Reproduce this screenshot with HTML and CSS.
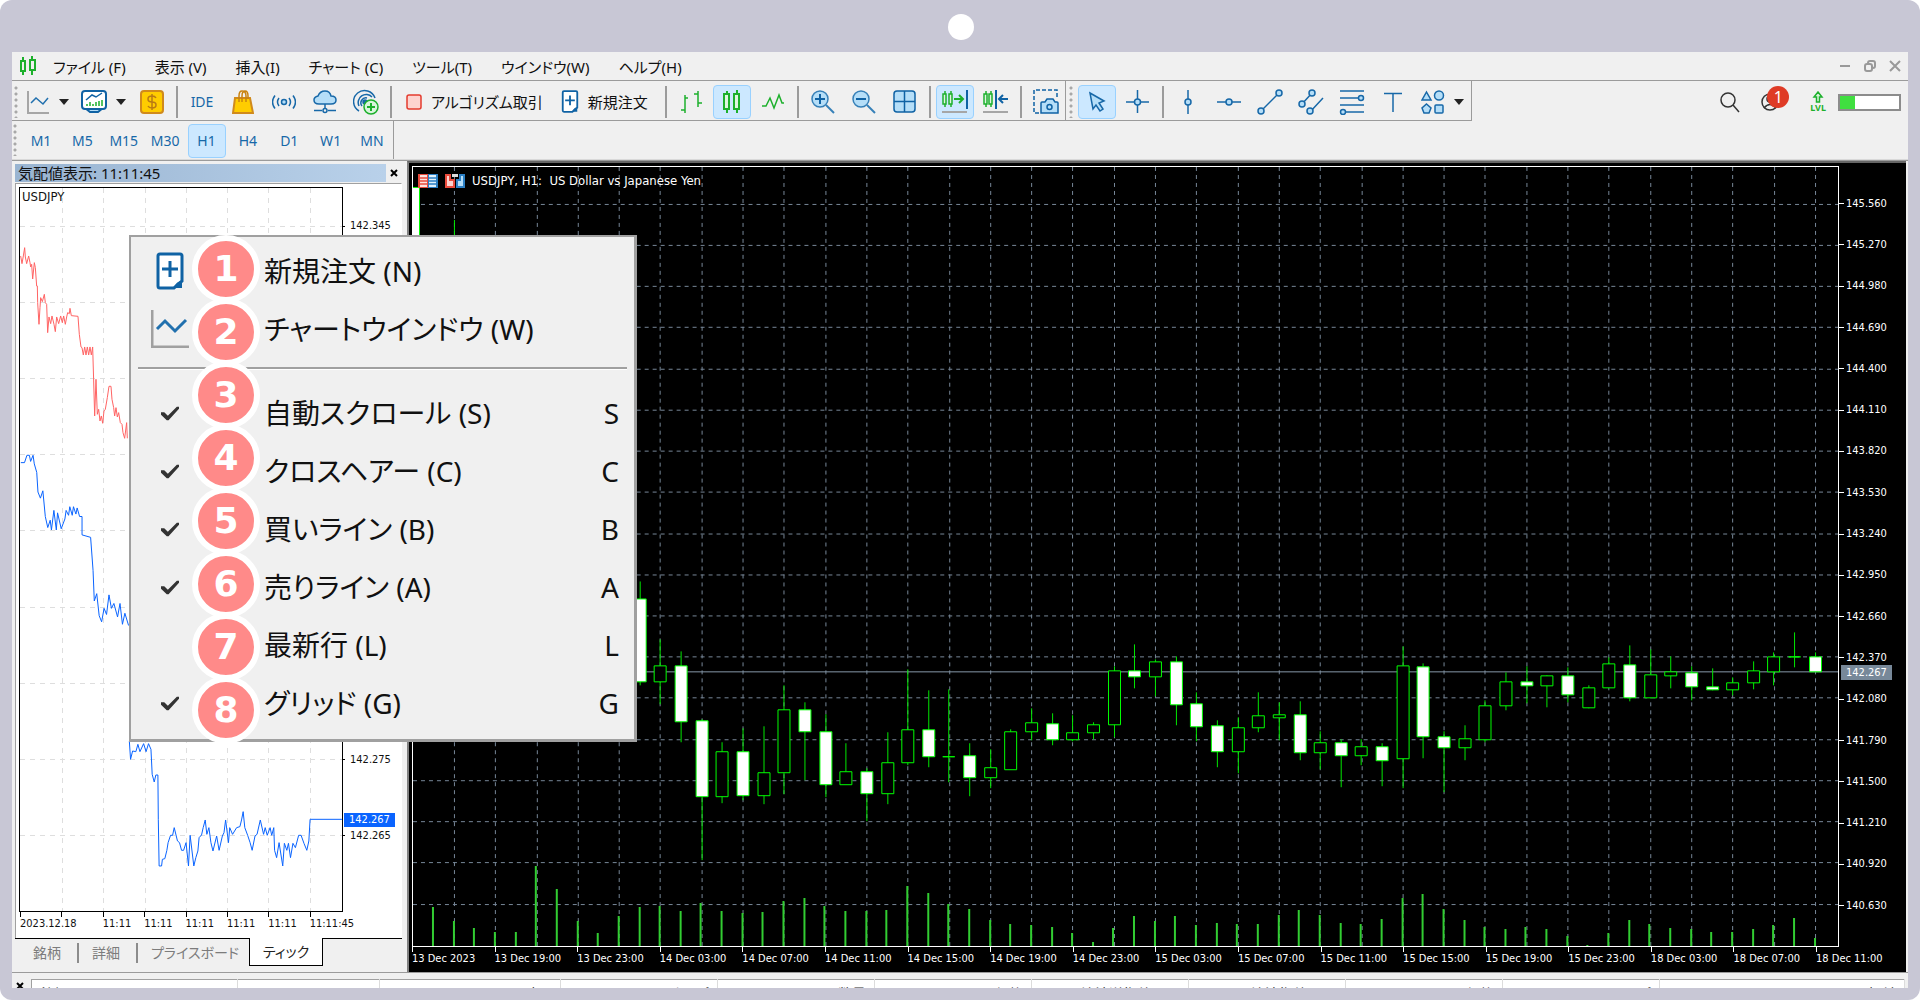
FILE: index.html
```html
<!DOCTYPE html>
<html lang="ja">
<head>
<meta charset="utf-8">
<meta name="viewport" content="width=device-width, initial-scale=1">
<title>USDJPY, H1</title>
<link rel="stylesheet" href="styles.css">
</head>
<body>
<div class="device">
<span class="camera"></span>
<div class="app">
  <header class="menubar">
    <svg class="logo" width="18" height="20" viewBox="0 0 18 20"><g fill="none" stroke="#1db02c" stroke-width="2"><path d="M4 1v4M4 15v4M13 0v4M13 14v5"/><rect x="2" y="5" width="4" height="10"/><rect x="11" y="4" width="5" height="10"/></g></svg>
    <nav class="menus">
      <button>ファイル (F)</button><button>表示 (V)</button><button>挿入(I)</button><button>チャート (C)</button><button>ツール(T)</button><button>ウインドウ(W)</button><button>ヘルプ(H)</button>
    </nav>
    <div class="winctl">
      <button aria-label="最小化"><svg width="12" height="12" viewBox="0 0 12 12"><path d="M1 6h10" stroke="#999" stroke-width="2"/></svg></button>
      <button aria-label="元に戻す"><svg width="12" height="12" viewBox="0 0 12 12"><g fill="none" stroke="#999" stroke-width="2"><rect x="1" y="4" width="7" height="7" rx="2"/><path d="M4 3q0-2 2-2h3q2 0 2 2v3q0 2-2 2"/></g></svg></button>
      <button aria-label="閉じる"><svg width="12" height="12" viewBox="0 0 12 12"><path d="M1 1l10 10M11 1L1 11" stroke="#999" stroke-width="2"/></svg></button>
    </div>
  </header>

  <div class="toolrow">
    <div class="toolbar">
      <span class="grip"></span>
      <button class="tool drop" aria-label="チャート"><svg width="24" height="24" viewBox="0 0 24 24" fill="none"><path d="M2 1v22h21" stroke="#a6a6a6" stroke-width="2"/><path d="M5 13l5-5 7 6 5-6" stroke="#2170ae" stroke-width="1.500"/></svg><i class="caret"></i></button>
      <button class="tool drop" aria-label="指標"><svg width="26" height="26" viewBox="0 0 26 26" fill="none" stroke="#0f62a4" stroke-width="2"><path d="M4 19l5 4h8l5-4" fill="#b5def8"/><rect x="1" y="2" width="24" height="18" rx="3" fill="#fff"/><path d="M5 11l6-5 4 2 6-4" stroke-width="1.5"/><path d="M6 17v-2M9 17v-4M12 17v-2M15 17v-4M18 17v-5M21 17v-6" stroke="#1db02c" stroke-width="1.5"/></svg><i class="caret"></i></button>
      <button class="tool" aria-label="取引"><svg width="24" height="24" viewBox="0 0 24 24"><rect x="1" y="1" width="22" height="22" rx="3" fill="#fc0" stroke="#d08a1c" stroke-width="2"/><path d="M16 8q-1-2-4-2-4 0-4 3t4 3 4 3-4 3q-3 0-4-2M12 4v16" fill="none" stroke="#b97a14" stroke-width="1.500"/></svg></button>
      <span class="sep"></span>
      <button class="tool">IDE</button>
      <button class="tool" aria-label="マーケット"><svg width="22" height="24" viewBox="0 0 22 24"><path d="M3 8h15l3 15H1z" fill="#fc0" stroke="#d08a1c" stroke-width="2"/><path d="M7 12V6q0-5 3-5 4 0 4 5v6M10 12V6q0-5 3-5 3 0 3 5v3" fill="none" stroke="#c9820f" stroke-width="1.5"/></svg></button>
      <button class="tool" aria-label="シグナル"><svg width="24" height="24" viewBox="0 0 24 24" fill="none" stroke="#1768a8" stroke-width="1.500"><circle cx="12" cy="12" r="2.5" fill="#b5def8"/><path d="M7 8q-3 4 0 8M17 8q3 4 0 8M3 5.500q-5 6.500 0 13M21 5.500q5 6.500 0 13"/></svg></button>
      <button class="tool" aria-label="VPS"><svg width="24" height="24" viewBox="0 0 24 24" fill="none" stroke="#1768a8" stroke-width="1.500"><path d="M6 14q-5 0-5-4 0-3 4-4 2-5 7-5t6 5q5 0 5 4t-5 4z" fill="#b5def8"/><path d="M12 14v4M1 20.500h8M15 20.500h8"/><circle cx="12" cy="20.500" r="2"/></svg></button>
      <button class="tool" aria-label="通知"><svg width="26" height="26" viewBox="0 0 26 26" fill="none" stroke="#1768a8" stroke-width="1.500"><path d="M6 22A11 11 0 1 1 22 9M6 17A8 8 0 0 1 19 8M9 17a5 5 0 0 1 5-8"/><circle cx="12" cy="13" r="2" fill="#1768a8"/><circle cx="18" cy="18" r="7" fill="#d9f5dc" stroke="#1db02c"/><path d="M14 18h8M18 14v8" stroke="#1db02c" stroke-width="2"/></svg></button>
      <span class="sep"></span>
      <button class="tool wide algo"><svg width="16" height="16" viewBox="0 0 16 16"><rect x="1" y="1" width="14" height="14" rx="2" fill="#fdd3cf" stroke="#e33b2e" stroke-width="1.500"/></svg>アルゴリズム取引</button>
      <button class="tool wide order"><svg width="18" height="23" viewBox="0 0 28 38"><path d="M4 2h20q2 0 2 2v25l-8 7H4q-2 0-2-2V4q0-2 2-2z" fill="#fff" stroke="#0f62a4" stroke-width="3"/><path d="M26 29v7h-8q2-7 8-7z" fill="#0f62a4"/><path d="M6 17h16M14 9v16" stroke="#0f62a4" stroke-width="3"/></svg>新規注文</button>
      <span class="sep"></span>
      <button class="tool" aria-label="バー"><svg width="22" height="24" viewBox="0 0 22 24"><path d="M5 5v18M1 20h4M5 8h3M18 1v16M14 4h4M18 13h4" stroke="#1db02c" stroke-width="1.500"/></svg></button>
      <button class="tool on" aria-label="ローソク足"><svg width="18" height="24" viewBox="0 0 18 24"><g fill="#dff6e0" stroke="#1db02c" stroke-width="2"><path d="M4 1v22M14 0v23"/><rect x="1" y="4" width="5" height="15"/><rect x="11" y="4" width="5" height="15"/></g></svg></button>
      <button class="tool" aria-label="ライン"><svg width="22" height="18" viewBox="0 0 22 18"><path d="M0 13h4l4-8 4 10 5-13 3 8h2" fill="none" stroke="#1db02c" stroke-width="1.500"/></svg></button>
      <span class="sep"></span>
      <button class="tool" aria-label="拡大"><svg width="24" height="24" viewBox="0 0 24 24" fill="none" stroke="#0f62a4"><path d="M15 15l8 8" stroke="#3680b8" stroke-width="2"/><circle cx="9" cy="9" r="8" fill="#b5def8" stroke="#3680b8" stroke-width="1.500"/><path d="M4 9h10M9 4v10" stroke-width="2"/></svg></button>
      <button class="tool" aria-label="縮小"><svg width="24" height="24" viewBox="0 0 24 24" fill="none" stroke="#0f62a4"><path d="M15 15l8 8" stroke="#3680b8" stroke-width="2"/><circle cx="9" cy="9" r="8" fill="#b5def8" stroke="#3680b8" stroke-width="1.500"/><path d="M4 9h10" stroke-width="2"/></svg></button>
      <button class="tool" aria-label="整列"><svg width="24" height="24" viewBox="0 0 24 24"><rect x="1" y="1" width="21" height="21" rx="3" fill="#b5def8" stroke="#0f62a4" stroke-width="1.500"/><path d="M11.500 1v21M1 11.500h21" stroke="#0f62a4" stroke-width="1.500"/></svg></button>
      <span class="sep"></span>
      <button class="tool on" aria-label="自動スクロール"><svg width="26" height="24" viewBox="0 0 26 24" fill="none" stroke="#1db02c" stroke-width="1.500"><path d="M3 1v16M9 1v16"/><rect x="1" y="4" width="3" height="10" fill="#dff6e0"/><rect x="7" y="4" width="3" height="10" fill="#dff6e0"/><path d="M12 9h9M17 5l4 4-4 4" stroke-width="2"/><path d="M25 0v19" stroke="#0f62a4" stroke-width="2"/><path d="M0 22h25" stroke="#a6a6a6" stroke-width="2"/></svg></button>
      <button class="tool" aria-label="チャートシフト"><svg width="26" height="24" viewBox="0 0 26 24" fill="none" stroke="#1db02c" stroke-width="1.500"><path d="M3 1v16M8 1v16"/><rect x="1" y="4" width="3" height="10" fill="#dff6e0"/><rect x="6" y="4" width="3" height="10" fill="#dff6e0"/><g stroke="#0f62a4" stroke-width="2"><path d="M13 0v19M17 9h8M20 5l-4 4 4 4"/></g><path d="M0 22h25" stroke="#a6a6a6" stroke-width="2"/></svg></button>
      <span class="sep"></span>
      <button class="tool" aria-label="画面保存"><svg width="26" height="26" viewBox="0 0 26 26" fill="none" stroke="#0f62a4"><path d="M6 24H1V1h23v9" stroke-width="1.500" stroke-dasharray="4 2"/><path d="M9 13h3l2-3h6l2 3h2q1 0 1 1v10H8V14q0-1 1-1z" fill="#b5def8" stroke-width="1.500"/><circle cx="16.500" cy="18" r="2.500" stroke-width="1.500"/></svg></button>
    </div>
    <div class="toolbar">
      <span class="grip"></span>
      <button class="tool on" aria-label="カーソル"><svg width="20" height="22" viewBox="0 0 20 22"><path d="M3 2l14 8-5 2 4 6-3 2-4-6-3 4z" fill="#b5def8" stroke="#1768a8" stroke-width="1.500"/></svg></button>
      <button class="tool" aria-label="十字カーソル"><svg width="24" height="24" viewBox="0 0 24 24"><g fill="#b5def8" stroke="#1768a8" stroke-width="1.500"><path d="M11.500 0v23M0 12h23"/><circle cx="11.500" cy="12" r="3"/></g></svg></button>
      <span class="sep"></span>
      <button class="tool" aria-label="垂直線"><svg width="8" height="24" viewBox="0 0 8 24"><g fill="#b5def8" stroke="#1768a8" stroke-width="1.500"><path d="M4 0v24"/><circle cx="4" cy="12" r="3"/></g></svg></button>
      <button class="tool" aria-label="水平線"><svg width="24" height="8" viewBox="0 0 24 8"><g fill="#b5def8" stroke="#1768a8" stroke-width="1.500"><path d="M0 4h24"/><circle cx="12" cy="4" r="3"/></g></svg></button>
      <button class="tool" aria-label="トレンドライン"><svg width="26" height="26" viewBox="0 0 26 26"><g fill="#b5def8" stroke="#1768a8" stroke-width="1.500"><path d="M4 22L22 4"/><circle cx="4" cy="22" r="3"/><circle cx="22" cy="4" r="3"/></g></svg></button>
      <button class="tool" aria-label="チャンネル"><svg width="26" height="26" viewBox="0 0 26 26"><g fill="#b5def8" stroke="#1768a8" stroke-width="1.500"><path d="M4 15L14 4M12 23L25 9"/><circle cx="4" cy="15" r="3"/><circle cx="14" cy="4" r="3"/><circle cx="12" cy="22" r="3"/></g></svg></button>
      <button class="tool" aria-label="フィボナッチ"><svg width="26" height="26" viewBox="0 0 26 26"><g fill="#b5def8" stroke="#1768a8" stroke-width="1.500"><path d="M1 2h24M1 9h24M1 16h24M1 23h24"/><circle cx="22" cy="9" r="2.500"/><circle cx="4" cy="23" r="2.500"/></g></svg></button>
      <button class="tool" aria-label="テキスト"><svg width="18" height="20" viewBox="0 0 18 20"><path d="M0 1.500h18M9 2v18" stroke="#1768a8" stroke-width="1.500"/></svg></button>
      <button class="tool shapes" aria-label="図形"><svg width="24" height="24" viewBox="0 0 24 24"><g fill="#b5def8" stroke="#1768a8" stroke-width="1.500"><path d="M5.500 2l4.500 8H1z"/><circle cx="18" cy="5.500" r="4.500"/><path d="M5.500 14l4.500 4-2 5H3l-2-5z"/><rect x="14" y="15" width="8" height="8" rx="1"/></g></svg><i class="caret"></i></button>
    </div>
    <div class="status">
      <button aria-label="検索"><svg width="20" height="22" viewBox="0 0 20 22" fill="none" stroke="#333" stroke-width="1.500"><circle cx="8" cy="9" r="7"/><path d="M13 14l6 7"/></svg></button>
      <button class="user" aria-label="アカウント"><svg width="20" height="20" viewBox="0 0 20 20" fill="none" stroke="#333" stroke-width="1.500"><circle cx="10" cy="10" r="8"/><circle cx="10" cy="7" r="3"/><path d="M4 16q6-7 12 0"/></svg><b class="count">1</b></button>
      <span class="lvl"><svg width="12" height="12" viewBox="0 0 12 12"><path d="M6 1l4 5H7.500v5h-3V6H2z" fill="#d9f5dc" stroke="#1db02c" stroke-width="1.500"/></svg>LVL</span>
      <span class="meter"><i style="width:26%"></i></span>
    </div>
  </div>

  <div class="periods">
    <span class="grip"></span>
    <div class="plist"><button>M1</button><button>M5</button><button>M15</button><button>M30</button><button class="on">H1</button><button>H4</button><button>D1</button><button>W1</button><button>MN</button></div>
  </div>

  <main class="work">
    <section class="watch">
      <div class="wtitle"><h2>気配値表示: 11:11:45</h2><button aria-label="閉じる"><svg width="8" height="8" viewBox="0 0 8 8"><path d="M1 1l6 6M7 1L1 7" stroke="#000" stroke-width="2"/></svg></button></div>
      <div class="ticks">
        <div class="tplot">
          <svg viewBox="20 187 322 723" preserveAspectRatio="none">
            <path class="tgrid" d="M62.500 187V910M103.500 187V910M145.500 187V910M186.500 187V910M227.500 187V910M268.500 187V910M310.500 187V910M20 225.500H342M20 301.500H342M20 377.500H342M20 453.500H342M20 529.500H342M20 606.500H342M20 682.500H342M20 758.500H342M20 834.500H342"/>
            <polyline class="ask" transform="translate(0 150) scale(.3333)" points="62,315 66,338 70,315 74,290 76,318 80,338 86,315 90,335 92,348 95,340 98,384 103,335 106,350 110,405 112,405 113,455 117,520 120,470 122,440 127,452 133,430 136,455 140,460 143,545 147,498 152,518 156,495 162,520 166,542 170,498 176,518 182,495 187,515 191,495 196,520 200,498 203,485 208,488 210,472 214,494 234,496 238,550 243,588 246,590 250,612 254,588 258,612 262,588 266,612 270,588 274,612 278,588 281,690 284,795 288,685 292,790 296,775 300,810 304,795 308,817 312,780 316,775 322,740 327,706 333,706 336,745 341,770 344,795 348,770 352,798 356,785 361,815 366,820 369,845 374,862 380,815 382,862"/>
            <polyline class="bid" transform="scale(1.2245)" points="17,377 20,377 22,371 24,371 25,376 27,371 28,378 30,385 31,401 33,406 35,400 37,421 39,430 41,424 42,432 44,416 46,432 47,418 50,431 53,423 54,416 56,420 57,413 59,420 60,413 62,419 63,414 65,421 67,421 67,436 74,438 76,465 77,490 79,484 81,502 83,507 85,496 87,501 89,485 91,496 93,492 96,503 98,492 100,509 102,500 105,510"/>
            <polyline class="bid" transform="translate(0 680) scale(.408 .3333)" points="317,180 320,235 325,210 333,212 338,190 343,212 352,188 358,212 364,188 370,205 373,280 378,303 382,282 387,282 388,415 390,555 396,555 398,535 404,533 409,508 412,485 418,463 423,463 427,440 435,480 440,485 445,508 450,508 456,485 462,555 466,463 475,555 480,530 485,510 488,470 494,462 498,440 503,417 507,460 512,440 517,485 522,510 531,465 537,508 545,465 549,455 553,417 560,485 563,440 570,460 580,440 588,437 592,417 596,392 600,440 607,463 613,485 618,508 625,465 630,460 638,417 646,460 650,440 655,463 662,440 666,463 671,440 673,508 678,530 684,485 693,555 697,487 703,508 707,487 712,530 718,487 724,500 732,463 738,463 745,487 752,508 757,480 760,415 838,415"/>
          </svg>
        </div>
        <div class="tprices"><span class="r1">142.345</span><span class="r8">142.275</span><span class="r9">142.265</span><b class="bidtag">142.267</b></div>
        <div class="ttimes"><span>2023.12.18</span><span></span><span>11:11</span><span>11:11</span><span>11:11</span><span>11:11</span><span>11:11</span><span>11:11:45</span></div>
        <span class="tsym">USDJPY</span>
      </div>
      <div class="tabs"><button>銘柄</button><button>詳細</button><button>プライスボード</button><button class="cur">ティック</button></div>
    </section>

    <section class="chart">
      <div class="plot">
        <svg id="plot" viewBox="412 166 1427 780" preserveAspectRatio="none"></svg>
        <div class="ctitle">
          <svg width="20" height="14" viewBox="0 0 20 14"><path d="M0 0h10v14H0z" fill="#e94b3c"/><path d="M10 0h10v14H10z" fill="#2b7fc4"/><path d="M2 1h7v12H2z" fill="#fde4e1"/><path d="M11 1h7v12h-7z" fill="#e1f1fc"/><path d="M2 4h7M2 7h7M2 10h7" stroke="#e94b3c" stroke-width="1.500"/><path d="M11 4h7M11 7h7M11 10h7" stroke="#2b7fc4" stroke-width="1.500"/></svg>
          <svg width="20" height="14" viewBox="0 0 20 14"><path d="M1 1h4v5h4v7H1z" fill="#fdd3cf" stroke="#e94b3c" stroke-width="2"/><path d="M19 1h-4v5h-3v7h7z" fill="#b5def8" stroke="#2b7fc4" stroke-width="2"/><path d="M7 0h6v3H7z" fill="#ddd"/></svg>
          <h1>USDJPY, H1:&nbsp; US Dollar vs Japanese Yen</h1>
        </div>
      </div>
      <div class="prices"><span>145.560</span><span>145.270</span><span>144.980</span><span>144.690</span><span>144.400</span><span>144.110</span><span>143.820</span><span>143.530</span><span>143.240</span><span>142.950</span><span>142.660</span><span>142.370</span><span>142.080</span><span>141.790</span><span>141.500</span><span>141.210</span><span>140.920</span><span>140.630</span><b class="last">142.267</b></div>
      <div class="times"><span>13 Dec 2023</span><span>13 Dec 19:00</span><span>13 Dec 23:00</span><span>14 Dec 03:00</span><span>14 Dec 07:00</span><span>14 Dec 11:00</span><span>14 Dec 15:00</span><span>14 Dec 19:00</span><span>14 Dec 23:00</span><span>15 Dec 03:00</span><span>15 Dec 07:00</span><span>15 Dec 11:00</span><span>15 Dec 15:00</span><span>15 Dec 19:00</span><span>15 Dec 23:00</span><span>18 Dec 03:00</span><span>18 Dec 07:00</span><span>18 Dec 11:00</span></div>
    </section>
  </main>

  <footer class="terminal">
    <button aria-label="閉じる"><svg width="8" height="8" viewBox="0 0 8 8"><path d="M1 1l6 6M7 1L1 7" stroke="#000" stroke-width="2"/></svg></button>
    <table><thead><tr><th class="l c1">銘柄</th><th class="l c2">チケット</th><th class="c3">時間</th><th class="c4">タイプ</th><th class="c4">数量</th><th class="c4">価格</th><th class="c4">決済逆指値(S/L)</th><th class="c4">決済指値(T/P)</th><th class="c4">価格</th><th class="c4">スワップ</th><th>損益</th></tr></thead></table>
  </footer>
</div>

<div class="popup" role="menu">
  <button role="menuitem"><svg width="28" height="38" viewBox="0 0 28 38"><path d="M4 2h20q2 0 2 2v25l-8 7H4q-2 0-2-2V4q0-2 2-2z" fill="#fff" stroke="#0f62a4" stroke-width="3"/><path d="M26 29v7h-8q2-7 8-7z" fill="#0f62a4"/><path d="M6 17h16M14 9v16" stroke="#0f62a4" stroke-width="3"/></svg><span>新規注文 (N)</span></button>
  <button role="menuitem"><svg width="38" height="38" viewBox="0 0 38 38" fill="none"><path d="M1 0v37h37" stroke="#a0a0a0" stroke-width="3"/><path d="M6 19l8-8 10 10 11-11" stroke="#2170ae" stroke-width="3"/></svg><span>チャートウインドウ (W)</span></button>
  <hr>
  <label><input type="checkbox" checked><span>自動スクロール (S)</span><kbd>S</kbd></label>
  <label><input type="checkbox" checked><span>クロスヘアー (C)</span><kbd>C</kbd></label>
  <label><input type="checkbox" checked><span>買いライン (B)</span><kbd>B</kbd></label>
  <label><input type="checkbox" checked><span>売りライン (A)</span><kbd>A</kbd></label>
  <label><input type="checkbox"><span>最新行 (L)</span><kbd>L</kbd></label>
  <label><input type="checkbox" checked><span>グリッド (G)</span><kbd>G</kbd></label>
</div>
<ol class="steps"><li>1</li><li>2</li><li>3</li><li>4</li><li>5</li><li>6</li><li>7</li><li>8</li></ol>
</div>
<script src="chart.js"></script>
</body>
</html>
```
FILE: styles.css
```css
* { box-sizing: border-box; }
body {
  margin: 0;
  background: #fff;
  color: #111;
  font-family: "Noto Sans", "Noto Sans CJK JP", sans-serif;
  font-feature-settings: "palt";
}
button {
  margin: 0; padding: 0; border: 0; background: none;
  font: inherit; font-feature-settings: inherit; color: inherit;
}
svg { display: block; flex: none; }
h1, h2 { margin: 0; font-weight: 400; }

.device {
  position: relative;
  height: 100vh; min-height: 760px;
  padding: 52px 12px 12px;
  border-radius: 12px;
  background: #c8c7d5;
}
.camera {
  position: absolute; top: 14px; left: 50%;
  width: 26px; height: 26px; margin-left: -12px;
  border-radius: 50%; background: #fff;
}
.app {
  display: flex; flex-direction: column;
  height: 100%; overflow: hidden;
  background: #f0f0f0;
}

/* menu bar */
.menubar {
  display: flex; align-items: center; flex: none;
  height: 29px; padding: 0 7px;
  border-bottom: 1px solid #9b9b9b;
}
.menus { display: flex; gap: 29px; margin-left: 16px; font-size: 15px; line-height: 20px; }
.menus button { padding-top: 1px; white-space: nowrap; }
.winctl { display: flex; gap: 13px; margin-left: auto; }

/* toolbars */
.toolrow { display: flex; flex: none; height: 40px; }
.toolbar {
  display: flex; align-items: center; gap: 3px;
  padding-top: 2px;
  border-right: 1px solid #9b9b9b; border-bottom: 1px solid #9b9b9b;
}
.grip {
  flex: none; width: 4px; height: 32px; margin-left: 1px;
  background: radial-gradient(circle at 2px 2px, #a8a8a8 1px, transparent 2px) 0 0 / 4px 6px;
}
.toolbar .grip { margin-left: 2px; }
.toolbar + .toolbar .grip { margin-right: 2px; margin-left: 3px; }
.tool {
  display: flex; align-items: center; justify-content: center; flex: none;
  width: 38px; height: 34px;
  border: 1px solid transparent; border-radius: 4px;
  color: #1768a8; font-size: 14px; line-height: 20px;
}
.tool.on, .plist .on { background: #cce8ff; border: 1px solid #99d1ff; }
.drop { width: 53px; gap: 9px; }
.shapes { width: 56px; gap: 9px; }
.wide { width: auto; padding: 0 8px; color: #111; font-size: 15px; gap: 9px; white-space: nowrap; }
.algo { padding-right: 6px; }
.order { padding: 0 11px 0 7px; }
.caret { border: 5px solid transparent; border-top: 6px solid #222; border-bottom: 0; }
.sep { flex: none; width: 2px; height: 32px; margin: 0 2px; background: #9b9b9b; }
.status { display: flex; align-items: center; margin-left: auto; padding: 2px 7px 0 0; }
.user { position: relative; margin: 0 30px 0 20px; }
.count {
  position: absolute; left: 7px; top: -6px;
  width: 22px; height: 22px; border-radius: 50%;
  background: #df3b26; color: #fff;
  font-size: 16px; line-height: 22px; font-weight: 400; text-align: center;
}
.lvl {
  display: flex; flex-direction: column; align-items: center;
  color: #1db02c; font-size: 9px; line-height: 10px; font-weight: 700;
}
.meter { width: 63px; height: 17px; margin-left: 12px; border: 2px solid #8c8c8c; background: #fff; }
.meter i { display: block; height: 100%; background: #40df40; }

.periods { display: flex; align-items: center; flex: none; height: 39px; border-bottom: 1px solid #d9d9d9; }
.plist {
  display: flex; align-items: center; justify-content: space-between;
  width: 372px; height: 38px; margin-left: 5px; padding: 1px 2px 0 0;
  border-right: 1px solid #9b9b9b;
}
.plist button {
  width: 38px; height: 34px; border: 1px solid transparent; border-radius: 4px;
  color: #1768a8; font-size: 14px; line-height: 20px;
}

/* work area */
.work { display: flex; flex: 1; min-height: 0; border-top: 1px solid #9b9b9b; border-bottom: 1px solid #9b9b9b; }
.watch { display: flex; flex-direction: column; flex: none; width: 395px; padding: 3px 5px 6px 3px; }
.wtitle { display: flex; flex: none; height: 18px; margin-bottom: 1px; }
.wtitle h2 {
  flex: 1; padding-left: 3px;
  background: linear-gradient(90deg, #99b4d1, #b9d1ea);
  font-size: 15px; line-height: 18px;
}
.wtitle button { display: grid; place-items: center; width: 16px; }
.ticks {
  position: relative;
  display: grid; flex: 1; min-height: 0;
  grid-template: minmax(0, 1fr) 26px / 324px minmax(0, 1fr);
  padding: 3px 0 0 3px;
  border: 1px solid #a0a0a0; border-bottom: 0; border-right-color: #fff;
  background: #fff;
  font: 11px/14px "DejaVu Sans Condensed", "DejaVu Sans", sans-serif;
}
.tplot { min-height: 0; border: 1px solid #000; }
.tplot svg, .plot svg#plot { width: 100%; height: 100%; }
.tgrid { fill: none; stroke: #dedede; stroke-dasharray: 5 5; }
.ask, .bid { fill: none; stroke: #ff6464; vector-effect: non-scaling-stroke; }
.bid { stroke: #0a64ff; }
.tsym { position: absolute; left: 6px; top: 5px; font-size: 13px; line-height: 16px; }
.tprices {
  position: relative; display: grid;
  grid-template-rows: 1fr repeat(9, minmax(0, 76fr)) 38fr;
}
.tprices span { display: flex; align-items: center; gap: 5px; }
.tprices span::before { content: ""; width: 2px; height: 1px; background: #000; }
.r1 { grid-row: 2; }
.r8 { grid-row: 9; }
.r9 { grid-row: 10; }
.bidtag {
  position: absolute; left: 1px; top: 86%; margin-top: 2px;
  padding: 0 5px; background: #0a64ff; color: #fff; font-weight: 400;
}
.ttimes {
  display: grid; grid-column: 1 / -1; grid-template-columns: repeat(8, minmax(0, 1fr));
  margin-right: 50px; padding-left: 1px;
}
.ttimes span { white-space: nowrap; }
.ttimes span::before, .times span::before { content: ""; display: block; width: 1px; height: 5px; background: #000; }
.tabs {
  display: flex; flex: none; height: 28px; padding-left: 18px;
  border-top: 1px solid #000; color: #7c7c7c; font-size: 14px; line-height: 26px;
}
.tabs button { position: relative; margin-right: 31px; white-space: nowrap; }
.tabs button + button:not(.cur)::before {
  content: ""; position: absolute; left: -15px; top: 4px; width: 2px; height: 20px; background: #8c8c8c;
}
.tabs button:nth-child(3) { margin-right: 10px; }
.tabs .cur { margin: -1px 0 0; padding: 0 13px; border: 1px solid #000; border-top: 0; background: #fff; color: #222; }

.chart {
  display: grid; flex: 1; min-width: 0;
  grid-template: minmax(0, 1fr) 25px / minmax(0, 1fr) 67px;
  margin-right: 2px; padding: 3px 0 0 3px;
  border-left: 2px solid #808080; border-top: 2px solid #666;
  background: #000; color: #fff;
  font: 11px/14px "DejaVu Sans Condensed", "DejaVu Sans", sans-serif;
}
.plot { position: relative; min-height: 0; border: 1px solid #fff; }
.grid { fill: none; stroke: #778899; stroke-dasharray: 4 4; }
.now { stroke: #8798a9; }
.wick { fill: none; stroke: #00e800; }
.up { fill: #000; stroke: #0f0; }
.down { fill: #fff; stroke: #0f0; }
.vol { fill: none; stroke: #32cd32; stroke-width: 2; }
.ctitle { position: absolute; left: 5px; top: 7px; display: flex; align-items: center; gap: 7px; }
.ctitle h1 { font-size: 13px; line-height: 14px; white-space: nowrap; }
.prices {
  position: relative; display: grid;
  grid-template-rows: repeat(18, minmax(0, 412fr)) 205fr;
  padding-top: 17px;
}
.prices span { display: flex; align-items: center; gap: 2px; }
.prices span::before { content: ""; width: 5px; height: 1px; background: #fff; }
.last {
  position: absolute; left: 2px; top: 64%; margin-top: -1px;
  padding: 0 5px; background: #778899; font-weight: 400; line-height: 15px;
}
.times { display: grid; grid-column: 1 / -1; grid-template-columns: repeat(17, minmax(0, 36fr)) minmax(0, 10fr); margin-right: 67px; }
.times span { white-space: nowrap; }
.times span::before { background: #fff; }

/* terminal header */
.terminal { display: flex; flex: none; height: 15px; padding: 6px 3px 0 4px; overflow: hidden; }
.terminal button { width: 8px; height: 8px; margin-top: 3px; margin-right: 7px; }
.terminal table {
  flex: 1; height: 30px; table-layout: fixed; border-collapse: collapse;
  border: 1px solid #a0a0a0; border-bottom: 0; background: #fff; font-size: 14px; line-height: 20px;
}
.terminal th {
  padding: 4px 8px 0; border-right: 1px solid #dcdcdc; font-weight: 400;
  text-align: right; vertical-align: top; white-space: nowrap; color: #333;
}
.terminal .l { text-align: left; }
.c1 { width: 206px; }
.c2 { width: 142px; }
.c3 { width: 181px; }
.c4 { width: 157px; }

/* context menu */
.popup {
  position: absolute; left: 129px; top: 235px;
  display: flex; flex-direction: column;
  width: 508px; padding: 5px 7px 7px;
  border: 3px solid #a0a0a0; border-top-width: 2px; border-left-width: 2px;
  background: #f0f0f0;
  font-size: 28px; line-height: 40px;
}
.popup button, .popup label {
  display: grid; grid-template-columns: 38px minmax(0, 1fr) auto; align-items: center;
  height: 58px; column-gap: 75px; padding: 0 8px 0 13px;
  text-align: left; white-space: nowrap;
}
.popup svg, .popup input { justify-self: center; }
.popup input {
  appearance: none; width: 18px; height: 15px; margin: 0;
  clip-path: polygon(0 45%, 18% 45%, 38% 68%, 88% 8%, 100% 8%, 100% 22%, 42% 98%, 32% 98%, 0 62%);
}
.popup input:checked { background: #333; }
.popup hr { width: 100%; height: 3px; margin: 9px 0 14px; border: 0; border-top: 2px solid #a0a0a0; border-bottom: 1px solid #fff; }
.popup kbd { font-family: inherit; }
.steps { position: absolute; left: 192px; top: 235px; margin: 0; padding: 0; list-style: none; }
.steps li {
  width: 68px; height: 68px; margin-bottom: -5px;
  border: 6px solid #fff; border-radius: 50%;
  background: #ff8a89; color: #fff;
  font: bold 36px/56px "DejaVu Sans", sans-serif; text-align: center;
}
```
FILE: chart.js
```js
// Candles: high, body top, body bottom, low, filled (1) or hollow (0)
const candles = [
  [581,598,681,685,1],[639,665,681,704,0],[651,665,721,742,1],[719,720,796,860,1],[742,751,796,803,0],
  [728,751,795,800,1],[726,772,795,804,0],[685,709,772,794,0],[702,709,731,780,1],[714,731,784,797,1],
  [743,771,784,784,0],[768,771,793,821,1],[732,762,793,804,0],[669,729,762,765,0],[690,729,756,767,1],
  [689,756,756,782,0],[743,755,777,796,1],[749,767,777,788,0],[729,731,769,769,0],[708,722,731,740,0],
  [713,723,739,745,1],[715,732,739,741,0],[722,724,732,739,0],[666,670,724,737,0],[644,670,676,688,1],
  [659,661,676,696,0],[656,661,704,725,1],[692,703,726,741,1],[720,725,751,767,1],[717,727,751,773,0],
  [692,715,727,732,0],[702,714,717,740,0],[701,714,752,760,1],[731,742,752,769,0],[739,742,755,787,1],
  [739,746,755,765,0],[743,746,760,786,1],[646,665,758,788,0],[663,666,736,758,1],[731,736,747,792,1],
  [725,738,747,760,0],[700,705,739,742,0],[672,681,705,710,0],[666,681,685,703,1],[675,675,685,707,0],
  [667,675,694,702,1],[685,687,707,708,0],[657,663,687,687,0],[645,664,697,701,1],[649,674,697,697,0],
  [656,671,675,688,0],[666,672,686,700,1],[668,686,689,690,1],[677,682,689,695,0],[661,670,682,689,0],
  [652,656,671,685,0],[632,656,656,667,0],[652,656,671,671,1]
];
// Tops of the volume bars, left to right
const volumes = [
  907,921,928,932,932,866,889,921,933,916,907,906,911,903,911,913,912,901,898,906,911,911,910,886,893,
  904,909,920,924,925,927,933,942,928,916,921,916,925,923,924,924,915,910,915,923,924,919,898,894,909,
  920,927,929,927,929,936,945,933,920,924,928,929,932,932,929,925,918,938
];
const ns = "http://www.w3.org/2000/svg";
const plot = document.getElementById("plot");
const add = (cls, d) => {
  const p = document.createElementNS(ns, "path");
  p.setAttribute("class", cls);
  p.setAttribute("d", d);
  plot.append(p);
};
const mid = v => Math.floor(v) + 0.5;
let grid = "";
for (let i = 0; i < 34; i++) grid += `M${mid(453.4 + i * 41.3)} 166V946`;
for (let i = 0; i < 18; i++) grid += `M412 ${mid(203.3 + i * 41.22)}H1839`;
add("grid", grid);
add("now", "M412 671.5H1839");
add("down", "M405.5 186.500H418.5V420.500H405.5Z");
add("wick", "M453.5 219V420");
candles.forEach(([hi, top, bottom, lo, filled], i) => {
  const x = mid(639.2 + i * 20.65);
  add("wick", `M${x} ${hi}V${lo}`);
  add(filled ? "down" : "up", `M${x - 6} ${top + 0.5}H${x + 6}V${bottom + 0.5}H${x - 6}Z`);
});
add("vol", volumes.map((y, i) => `M${Math.round(432 + i * 20.65)} ${y}V946`).join(""));
```
